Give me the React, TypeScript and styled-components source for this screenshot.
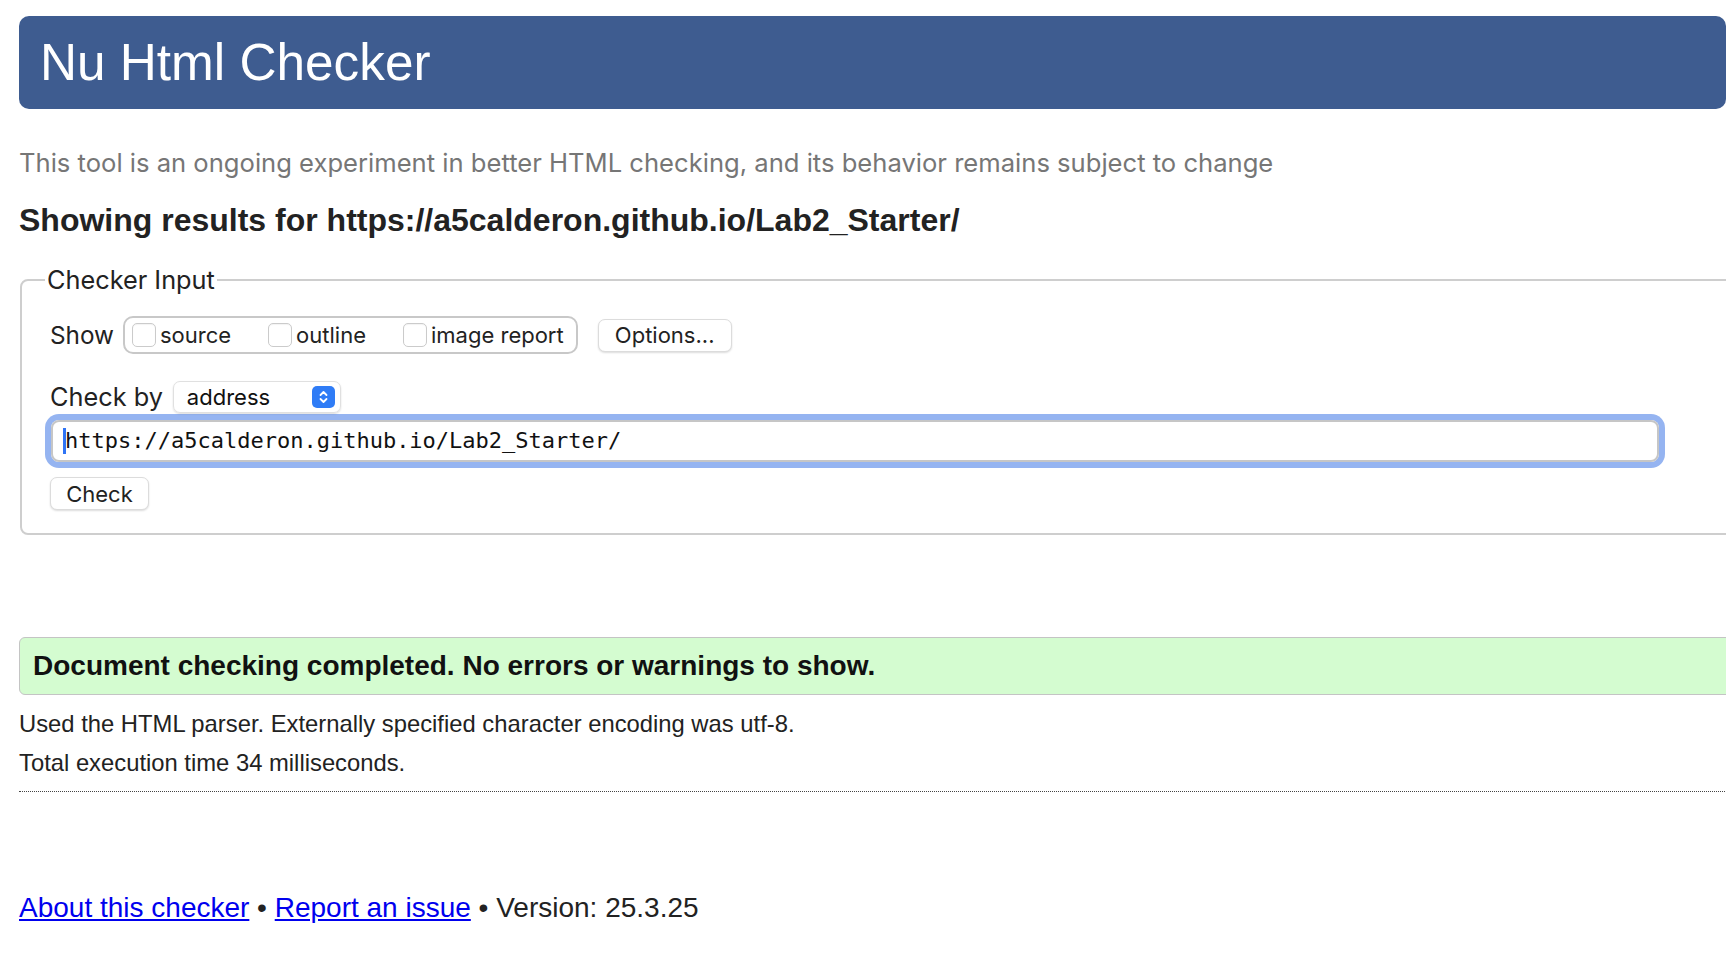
import React from 'react';
import styled, { createGlobalStyle } from 'styled-components';

const GlobalStyle = createGlobalStyle`
  html, body { margin: 0; padding: 0; background: #fff; overflow: hidden; }
  body { font-family: "Liberation Sans", Arial, sans-serif; color: #222; }
`;

const Page = styled.div`
  width: 1726px;
  height: 968px;
  overflow: hidden;
  box-sizing: border-box;
  padding: 16px 0 0 19px;
`;

const Header = styled.header`
  width: 1707px;
  height: 93px;
  box-sizing: border-box;
  background: #3e5c90;
  border-radius: 10px;
  display: flex;
  align-items: center;
  padding-left: 21px;
`;

const Title = styled.h1`
  margin: 0;
  font: 400 51.3px/1 "Liberation Sans", Arial, sans-serif;
  color: #fff;
`;

const Intro = styled.p`
  margin: 39px 0 0 0;
  font: 400 25.6px/30px Inter, "Noto Sans", sans-serif;
  color: #767676;
  white-space: nowrap;
`;

const ResultsHeading = styled.h2`
  margin: 23px 0 0 0;
  font: 700 32px/38px "Liberation Sans", Arial, sans-serif;
  color: #222;
  white-space: nowrap;
`;

const Fieldset = styled.fieldset`
  margin: 26px 0 0 1px;
  width: 1760px;
  min-width: 0;
  box-sizing: border-box;
  border: 2px solid #cecece;
  border-radius: 8px;
  padding: 21px 0 23px 28px;
`;

const Legend = styled.legend`
  margin-left: -5px;
  padding: 0 2px;
  font: 400 25.3px/30px Inter, "Noto Sans", sans-serif;
  color: #222;
`;

const Row = styled.div<{ $top?: number }>`
  display: flex;
  align-items: center;
  margin-top: ${(p) => p.$top ?? 0}px;
`;

const RowLabel = styled.span<{ $gap: number; $size?: number }>`
  font: 400 ${(p) => p.$size ?? 24}px/30px Inter, "Noto Sans", sans-serif;
  color: #222;
  margin-right: ${(p) => p.$gap}px;
`;

const CheckGroup = styled.div`
  display: flex;
  align-items: center;
  height: 38px;
  box-sizing: border-box;
  border: 2px solid #c8c8c8;
  border-radius: 10px;
  padding: 0 12px 0 7px;
`;

const CheckItem = styled.label`
  display: flex;
  align-items: center;
  margin-right: 37px;
  font: 400 22px/30px Inter, "Noto Sans", sans-serif;
  color: #222;
  &:last-child { margin-right: 0; }
`;

const Box = styled.input`
  appearance: none;
  margin: 0 4px 0 0;
  width: 24px;
  height: 24px;
  box-sizing: border-box;
  border: 1px solid #cbcbcb;
  border-radius: 5px;
  background: #fff;
  box-shadow: inset 0 1px 1px rgba(0, 0, 0, 0.05);
`;

const Button = styled.button<{ $w: number; $left?: number; $top?: number }>`
  display: flex;
  align-items: center;
  justify-content: center;
  width: ${(p) => p.$w}px;
  height: 33px;
  margin: ${(p) => p.$top ?? 0}px 0 0 ${(p) => p.$left ?? 0}px;
  padding: 0;
  box-sizing: border-box;
  background: #fff;
  border: 1px solid #dcdcdc;
  border-radius: 7px;
  box-shadow: 0 1px 2px rgba(0, 0, 0, 0.14);
  font: 400 22px/1 Inter, "Noto Sans", sans-serif;
  color: #222;
`;

const Select = styled.div`
  display: flex;
  align-items: center;
  justify-content: space-between;
  width: 168px;
  height: 32px;
  box-sizing: border-box;
  padding: 0 5px 0 13px;
  border: 1px solid #e0e0e0;
  border-radius: 7px;
  box-shadow: 0 1px 2px rgba(0, 0, 0, 0.14);
  font: 400 22px/1 Inter, "Noto Sans", sans-serif;
  color: #111;
`;

const Stepper = styled.span`
  display: flex;
  align-items: center;
  justify-content: center;
  width: 23px;
  height: 22px;
  border-radius: 5px;
  background: #2f7cf6;
`;

const UrlField = styled.div`
  display: flex;
  align-items: center;
  width: 1608px;
  height: 42px;
  margin: 7px 0 0 1px;
  box-sizing: border-box;
  padding-left: 10px;
  border: 2px solid #c6c6c6;
  border-radius: 8px;
  box-shadow: 0 0 0 6px #95b4f1;
  font: 400 22px/1 "DejaVu Sans Mono", "Liberation Mono", monospace;
  color: #111;
`;

const Caret = styled.span`
  width: 3px;
  height: 26px;
  margin-right: -1px;
  background: #2f74f5;
`;

const Success = styled.div`
  display: flex;
  align-items: center;
  width: 1760px;
  height: 58px;
  margin-top: 102px;
  box-sizing: border-box;
  padding-left: 13px;
  border: 1px solid #c4c4c4;
  border-radius: 6px;
  background: #d4fcd0;
  font: 700 28px/1 "Liberation Sans", Arial, sans-serif;
  color: #111;
`;

const Details = styled.p<{ $top: number }>`
  margin: ${(p) => p.$top}px 0 0;
  font: 400 23.8px/28px "Liberation Sans", Arial, sans-serif;
  color: #222;
`;

const Rule = styled.hr`
  width: 1760px;
  margin: 14px 0 0;
  border: 0;
  border-top: 1px dotted #444;
`;

const Footer = styled.p`
  margin: 99px 0 0;
  font: 400 28px/34px "Liberation Sans", Arial, sans-serif;
  color: #222;
  a { color: #0000ee; text-decoration: underline; }
`;

export default function App() {
  return (
    <>
      <GlobalStyle />
      <Page>
        <Header>
          <Title>Nu Html Checker</Title>
        </Header>
        <Intro>
          This tool is an ongoing experiment in better HTML checking, and its behavior remains subject to change
        </Intro>
        <ResultsHeading>Showing results for https://a5calderon.github.io/Lab2_Starter/</ResultsHeading>
        <Fieldset>
          <Legend>Checker Input</Legend>
          <Row>
            <RowLabel $gap={9} $size={24.3}>Show</RowLabel>
            <CheckGroup>
              <CheckItem>
                <Box type="checkbox" />
                source
              </CheckItem>
              <CheckItem>
                <Box type="checkbox" />
                outline
              </CheckItem>
              <CheckItem>
                <Box type="checkbox" />
                image report
              </CheckItem>
            </CheckGroup>
            <Button $w={134} $left={20}>Options...</Button>
          </Row>
          <Row $top={27}>
            <RowLabel $gap={10} $size={25.3}>Check by</RowLabel>
            <Select>
              address
              <Stepper>
                <svg width="11" height="16" viewBox="0 0 11 16">
                  <path
                    d="M2.5 6 L5.5 3 L8.5 6 M2.5 10 L5.5 13 L8.5 10"
                    stroke="#fff"
                    strokeWidth="1.8"
                    fill="none"
                    strokeLinecap="round"
                    strokeLinejoin="round"
                  />
                </svg>
              </Stepper>
            </Select>
          </Row>
          <UrlField>
            <Caret />
            https://a5calderon.github.io/Lab2_Starter/
          </UrlField>
          <Button $w={99} $top={15}>Check</Button>
        </Fieldset>
        <Success>Document checking completed. No errors or warnings to show.</Success>
        <Details $top={15}>Used the HTML parser. Externally specified character encoding was utf-8.</Details>
        <Details $top={11}>Total execution time 34 milliseconds.</Details>
        <Rule />
        <Footer>
          <a href="#about">About this checker</a> • <a href="#issue">Report an issue</a> • Version: 25.3.25
        </Footer>
      </Page>
    </>
  );
}
